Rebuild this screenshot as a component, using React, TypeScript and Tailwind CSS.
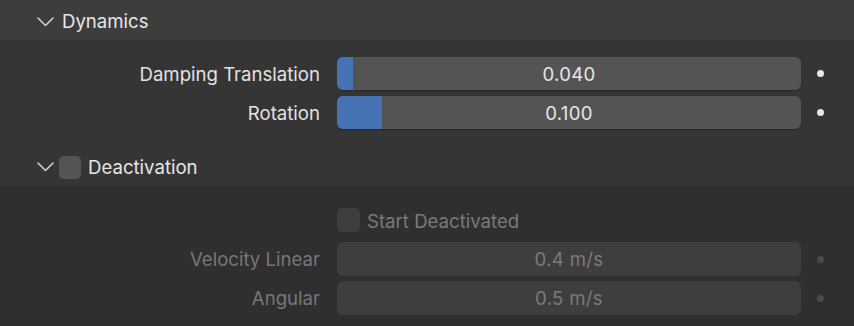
import React from "react";

const font = { fontFamily: "Inter, 'Noto Sans', sans-serif" };

function Chevron() {
  return (
    <svg width="18" height="10" viewBox="0 0 18 10" className="shrink-0">
      <polyline points="1,1 8.5,8.5 16,1" fill="none" stroke="#cfcfcf" strokeWidth="1.6" strokeLinecap="round" strokeLinejoin="round" />
    </svg>
  );
}

function SliderRow({ label, value, frac }: { label: string; value: string; frac: number }) {
  return (
    <div className="flex items-center h-[33px]">
      <div className="w-[320px] text-right text-[18.6px] text-[#e2e2e2] pt-[2px]">{label}</div>
      <div className="ml-[17px] w-[464px] h-[33px] rounded-[6px] bg-[#545454] relative overflow-hidden flex items-center justify-center shadow-[0_1px_1px_rgba(0,0,0,0.25)]">
        <div className="absolute left-0 top-0 bottom-0 bg-[#4772b3]" style={{ width: `${frac}px` }} />
        <span className="relative text-[18.6px] tracking-[0.3px] text-[#e6e6e6] pt-[2px]">{value}</span>
      </div>
      <div className="flex-1 flex justify-center pr-[14px]">
        <div className="w-[7px] h-[7px] rounded-full bg-[#e8e8e8]" />
      </div>
    </div>
  );
}

function DisabledRow({ label, value }: { label: string; value: string }) {
  return (
    <div className="flex items-center h-[34px]">
      <div className="w-[320px] text-right text-[18.6px] text-[#777777] pt-[2px]">{label}</div>
      <div className="ml-[17px] w-[464px] h-[34px] rounded-[6px] bg-[#3e3e3e] flex items-center justify-center">
        <span className="text-[18.6px] tracking-[0.3px] text-[#7a7a7a] pt-[2px]">{value}</span>
      </div>
      <div className="flex-1 flex justify-center pr-[14px]">
        <div className="w-[7px] h-[7px] rounded-full bg-[#4a4a4a]" />
      </div>
    </div>
  );
}

export default function App() {
  return (
    <div className="w-[854px] h-[326px] overflow-hidden bg-[#2f2f2f]" style={font}>
      <div className="h-[40px] bg-[#3d3d3d] flex items-center pl-[37px] pt-[3px]">
        <Chevron />
        <span className="ml-[7px] text-[18.6px] text-[#e6e6e6]">Dynamics</span>
      </div>
      <div className="bg-[#353535] pt-[17px] pb-[19px] flex flex-col gap-[6px]">
        <SliderRow label="Damping Translation" value="0.040" frac={16} />
        <SliderRow label="Rotation" value="0.100" frac={45} />
      </div>
      <div className="h-[38px] bg-[#353535] flex items-center pl-[37px]">
        <Chevron />
        <div className="ml-[4px] w-[22px] h-[23px] rounded-[5px] bg-[#545454]" />
        <span className="ml-[7px] text-[18.6px] text-[#e6e6e6] pt-[1px]">Deactivation</span>
      </div>
      <div className="pt-[22px] flex flex-col">
        <div className="flex items-center h-[24px]">
          <div className="ml-[337px] w-[23px] h-[24px] rounded-[5px] bg-[#3e3e3e]" />
          <span className="ml-[7px] text-[18.6px] text-[#7a7a7a] pt-[3px]">Start Deactivated</span>
        </div>
        <div className="mt-[10px] flex flex-col gap-[5px]">
          <DisabledRow label="Velocity Linear" value="0.4 m/s" />
          <DisabledRow label="Angular" value="0.5 m/s" />
        </div>
      </div>
    </div>
  );
}
